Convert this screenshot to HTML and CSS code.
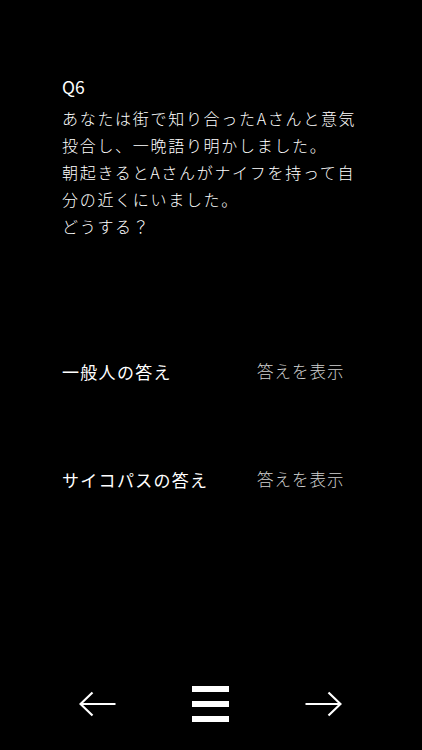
FILE: index.html
```
<!DOCTYPE html>
<html lang="ja">
<head>
<meta charset="utf-8">
<link rel="stylesheet" href="styles.css">
</head>
<body>
<div class="screen">
  <main class="content">
    <div class="qnum">Q6</div>
    <p class="question">あなたは街で知り合ったAさんと意気<br>投合し、一晩語り明かしました。<br>朝起きるとAさんがナイフを持って自<br>分の近くにいました。<br>どうする？</p>
    <div class="answers">
      <div class="answer">
        <span class="label">一般人の答え</span>
        <span class="reveal">答えを表示</span>
      </div>
      <div class="answer">
        <span class="label">サイコパスの答え</span>
        <span class="reveal">答えを表示</span>
      </div>
    </div>
  </main>
  <nav class="nav">
    <svg class="arrow" viewBox="0 0 37 26" width="37" height="26"><path d="M1.5 13 H36.5 M13.5 1.5 L1.5 13 L13.5 24.5" fill="none" stroke="#fff" stroke-width="2.2"/></svg>
    <div class="menu"><span class="bar"></span><span class="bar"></span><span class="bar"></span></div>
    <svg class="arrow" viewBox="0 0 37 26" width="37" height="26"><path d="M0.5 13 H35.5 M23.5 1.5 L35.5 13 L23.5 24.5" fill="none" stroke="#fff" stroke-width="2.2"/></svg>
  </nav>
</div>
</body>
</html>
```
FILE: styles.css
```
html, body {
  margin: 0;
  padding: 0;
  background: #000;
}
.screen {
  height: 750px;
  display: flex;
  flex-direction: column;
  color: #fff;
  font-family: "Noto Sans CJK JP", "Noto Sans", sans-serif;
}
.content {
  padding: 73px 0 0 62px;
}
.qnum {
  font-size: 17.5px;
  line-height: 27px;
  font-weight: 400;
  margin-bottom: 5px;
}
.question {
  margin: 0;
  font-size: 16px;
  line-height: 27px;
  letter-spacing: 1.7px;
  font-weight: 300;
  white-space: nowrap;
}
.answers {
  margin-top: 118px;
  display: flex;
  flex-direction: column;
  gap: 81px;
}
.answer {
  display: grid;
  grid-template-columns: 195px auto;
  line-height: 27px;
  font-size: 17px;
}
.label {
  font-weight: 400;
  letter-spacing: 1.3px;
}
.reveal {
  color: #d0d0d0;
  font-weight: 300;
  font-size: 16.5px;
  letter-spacing: 1px;
}
.nav {
  margin-top: auto;
  display: flex;
  justify-content: space-between;
  align-items: center;
  padding: 0 80px 28px 79px;
  height: 37px;
}
.arrow {
  display: block;
}
.menu {
  width: 37px;
  display: flex;
  flex-direction: column;
  gap: 9px;
}
.bar {
  display: block;
  height: 6px;
  background: #fff;
}
```
